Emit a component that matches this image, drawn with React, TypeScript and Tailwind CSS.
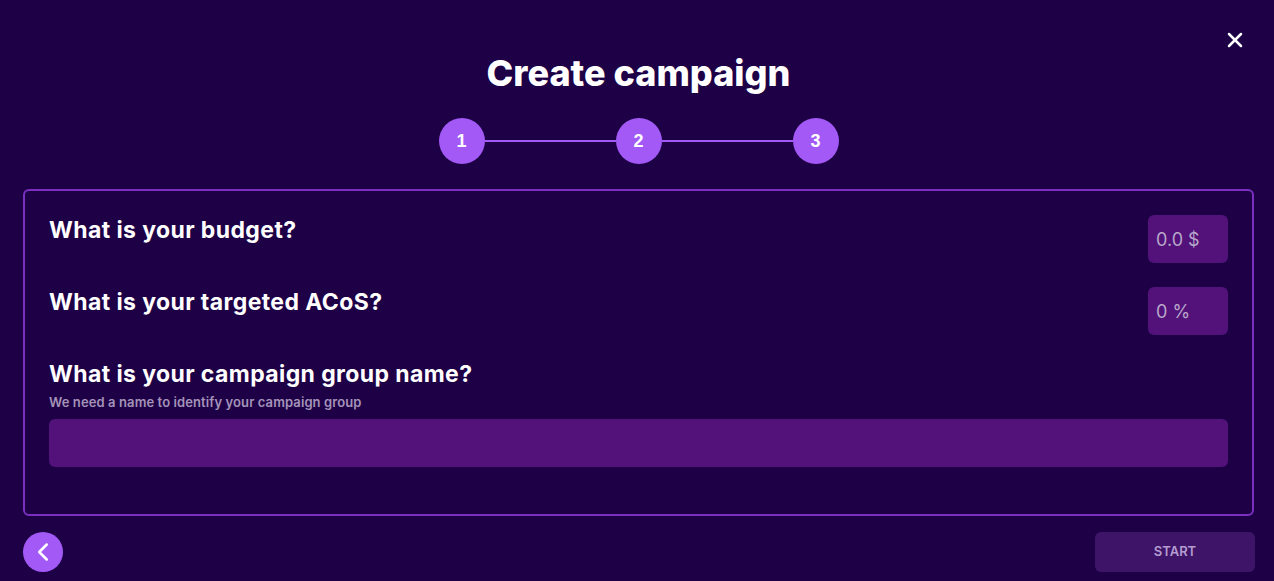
import { X, ChevronLeft } from "lucide-react";

const steps = [1, 2, 3];

function StepBar() {
  return (
    <div className="flex items-center justify-center">
      {steps.map((n, i) => (
        <div key={n} className="flex items-center">
          {i > 0 && <div className="h-[2px] w-[131px] bg-[#a259f5]" />}
          <div
            className="flex h-[46px] w-[46px] items-center justify-center rounded-full bg-[#a259f5] text-[18px] font-bold text-white"
            style={{ fontFamily: "'Liberation Sans', Arial, sans-serif" }}
          >
            {n}
          </div>
        </div>
      ))}
    </div>
  );
}

function SmallField({ label, placeholder }: { label: string; placeholder: string }) {
  return (
    <div className="flex items-start justify-between">
      <h3 className="text-[23px] font-bold leading-[30px] tracking-[0.4px] text-white">{label}</h3>
      <input
        placeholder={placeholder}
        className="h-12 w-20 rounded-md bg-[#52127a] px-2 text-[18px] text-[#b7a7c9] placeholder:text-[#b7a7c9] outline-none"
      />
    </div>
  );
}

export default function App() {
  return (
    <div
      className="relative min-h-[581px] w-full bg-[#1e0046] pl-[23px] pr-5 pt-[50px]"
      style={{ fontFamily: "Inter, 'Noto Sans', sans-serif" }}
    >
      <button className="absolute right-[27px] top-[28px] text-white">
        <X size={24} strokeWidth={2.5} />
      </button>

      <h1 className="text-center text-[36px] font-extrabold leading-[46px] text-white">
        Create campaign
      </h1>

      <div className="mt-[22px]">
        <StepBar />
      </div>

      <div className="mt-[25px] rounded-md border-2 border-[#7a2fc0] px-6 pb-[47px] pt-6">
        <div className="flex flex-col gap-6">
          <SmallField label="What is your budget?" placeholder="0.0 $" />
          <SmallField label="What is your targeted ACoS?" placeholder="0 %" />
        </div>

        <div className="mt-6">
          <h3 className="text-[23px] font-bold leading-[30px] tracking-[0.4px] text-white">
            What is your campaign group name?
          </h3>
          <p className="mt-[5px] text-[13px] font-semibold leading-[16px] tracking-[0.1px] text-[#a493b9]">
            We need a name to identify your campaign group
          </p>
          <input className="mt-[9px] h-12 w-full rounded-md bg-[#52127a] px-3 text-white outline-none" />
        </div>
      </div>

      <div className="mt-4 flex items-center justify-between">
        <button className="flex h-10 w-10 items-center justify-center rounded-full bg-[#a259f5] text-white">
          <ChevronLeft size={30} strokeWidth={2} />
        </button>
        <button className="-mr-px h-10 w-40 rounded-md bg-[#3d1468] text-[13px] font-semibold text-[#b59cd0]">
          START
        </button>
      </div>
    </div>
  );
}
